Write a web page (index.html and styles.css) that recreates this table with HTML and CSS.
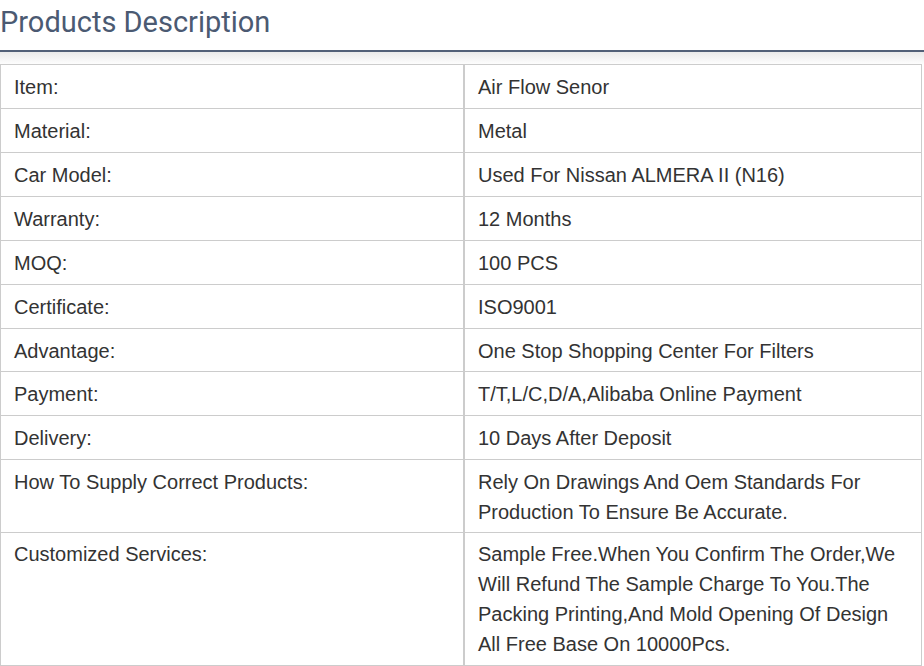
FILE: index.html
```html
<!DOCTYPE html>
<html>
<head>
<meta charset="utf-8">
<link rel="stylesheet" href="styles.css">
</head>
<body>
<div class="page">
  <h2 class="title">Products Description</h2>
  <div class="shade"></div>
  <table class="spec">
    <tr><td class="k">Item:</td><td class="v">Air Flow Senor</td></tr>
    <tr><td class="k">Material:</td><td class="v">Metal</td></tr>
    <tr><td class="k">Car Model:</td><td class="v">Used For Nissan ALMERA II (N16)</td></tr>
    <tr><td class="k">Warranty:</td><td class="v">12 Months</td></tr>
    <tr><td class="k">MOQ:</td><td class="v">100 PCS</td></tr>
    <tr><td class="k">Certificate:</td><td class="v">ISO9001</td></tr>
    <tr class="tight"><td class="k">Advantage:</td><td class="v">One Stop Shopping Center For Filters</td></tr>
    <tr><td class="k">Payment:</td><td class="v">T/T,L/C,D/A,Alibaba Online Payment</td></tr>
    <tr><td class="k">Delivery:</td><td class="v">10 Days After Deposit</td></tr>
    <tr class="tight"><td class="k">How To Supply Correct Products:</td><td class="v">Rely On Drawings And Oem Standards For Production To Ensure Be Accurate.</td></tr>
    <tr class="raised"><td class="k">Customized Services:</td><td class="v">Sample Free.When You Confirm The Order,We Will Refund The Sample Charge To You.The Packing Printing,And Mold Opening Of Design All Free Base On 10000Pcs.</td></tr>
  </table>
</div>
</body>
</html>
```

FILE: styles.css
```css
html, body {
  margin: 0;
  padding: 0;
  background: #fff;
}
.page {
  width: 924px;
}
.title {
  margin: 0;
  font-family: Roboto, "Noto Sans", sans-serif;
  font-weight: 400;
  font-size: 29px;
  line-height: 44px;
  height: 50px;
  color: #4b5a72;
  border-bottom: 2px solid #515f77;
  padding: 0;
}
.shade {
  height: 12px;
  background: linear-gradient(#e9e9e9, #fdfdfd);
}
.spec {
  width: 922px;
  border-collapse: collapse;
  table-layout: fixed;
  font-family: "Liberation Sans", Arial, sans-serif;
  font-size: 20px;
  line-height: 30px;
  color: #333;
}
.spec td {
  border: 1px solid #cccccc;
  padding: 7px 13px 6px;
  vertical-align: top;
}
.spec td.k {
  width: 436px;
}
.spec td.v {
  border-left: 2px solid #cccccc;
}
.spec tr.tight td {
  padding-bottom: 5px;
}
.spec tr.raised td {
  padding-top: 6px;
}
```
